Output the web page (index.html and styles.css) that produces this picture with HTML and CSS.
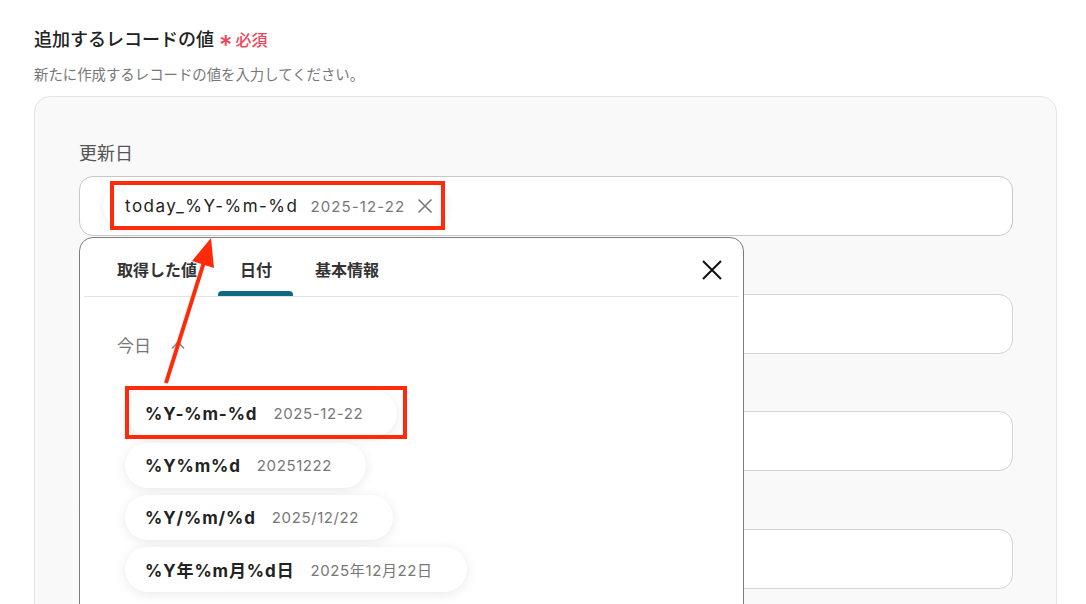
FILE: index.html
```html
<!DOCTYPE html>
<html lang="ja">
<head>
<meta charset="utf-8">
<title>追加するレコードの値</title>
<link rel="stylesheet" href="styles.css">
</head>
<body>
<section class="section">
  <h2 class="title">追加するレコードの値<span class="req"><span class="ast">*</span>必須</span></h2>
  <p class="desc">新たに作成するレコードの値を入力してください。</p>
  <div class="panel">
    <div class="field">
      <label class="label">更新日</label>
      <div class="input">
        <div class="tag">
          <span class="tag-key">today_%Y-%m-%d</span>
          <span class="tag-val">2025-12-22</span>
          <svg class="tag-x" width="16" height="16" viewBox="0 0 16 16"><path d="M1.5 1.5L14.5 14.5M14.5 1.5L1.5 14.5" stroke="#7a7a7a" stroke-width="1.6" fill="none"/></svg>
          <span class="mark mark-tag"></span>
        </div>
      </div>
      <div class="popup">
        <div class="tabs">
          <div class="tab">取得した値</div>
          <div class="tab active">日付</div>
          <div class="tab">基本情報</div>
          <svg class="close" width="20" height="20" viewBox="0 0 20 20"><path d="M1 1L19 19M19 1L1 19" stroke="#111" stroke-width="2" fill="none"/></svg>
        </div>
        <div class="popup-body">
          <div class="group-head">今日
            <svg class="chev" width="14" height="10" viewBox="0 0 14 10"><path d="M1 8.5L7 2L13 8.5" stroke="#8a8a8a" stroke-width="1.6" fill="none"/></svg>
          </div>
          <div class="items">
            <div class="item first"><span class="key">%Y-%m-%d</span><span class="val">2025-12-22</span><span class="mark mark-item"></span></div>
            <div class="item"><span class="key">%Y%m%d</span><span class="val">20251222</span></div>
            <div class="item"><span class="key">%Y/%m/%d</span><span class="val">2025/12/22</span></div>
            <div class="item"><span class="key">%Y年%m月%d日</span><span class="val">2025年12月22日</span></div>
          </div>
        </div>
      </div>
    </div>
    <div class="field">
      <label class="label">名前</label>
      <div class="input"></div>
    </div>
    <div class="field">
      <label class="label">メール</label>
      <div class="input"></div>
    </div>
    <div class="field">
      <label class="label">備考</label>
      <div class="input"></div>
    </div>
  </div>
</section>
<svg class="arrow" width="1086" height="604" viewBox="0 0 1086 604">
  <line x1="166" y1="383" x2="204" y2="262" stroke="#ff2a0a" stroke-width="4"/>
  <polygon points="211,238 214,268 192,261" fill="#ff2a0a"/>
</svg>
</body>
</html>
```
FILE: styles.css
```css
* { box-sizing: border-box; }
html, body { margin: 0; padding: 0; background: #fff; overflow: hidden; }
body {
  font-family: Inter, "Noto Sans CJK JP", sans-serif;
  color: #222;
  width: 1086px;
  height: 604px;
  position: relative;
}
.section {
  padding: 28px 29px 0 34px;
}
.title {
  margin: 0;
  font-size: 18px;
  line-height: 24px;
  font-weight: 500;
  color: #222;
  display: flex;
  align-items: center;
}
.req {
  margin-left: 5px;
  font-size: 16px;
  font-weight: 500;
  color: #f0445c;
  display: flex;
  align-items: center;
}
.ast {
  font-size: 26px;
  line-height: 16px;
  margin-right: 3px;
  position: relative;
  top: 5px;
}
.desc {
  margin: 14px 0 0;
  font-size: 14.4px;
  line-height: 18px;
  color: #777;
}
.panel {
  margin-top: 12px;
  background: #f9f9f9;
  border: 1px solid #e5e5e5;
  border-radius: 16px;
  padding: 46px 43px 40px 44px;
  display: flex;
  flex-direction: column;
  gap: 24.5px;
}
.field { position: relative; }
.label {
  display: block;
  font-size: 18px;
  line-height: 22px;
  color: #555;
  margin-bottom: 11px;
}
.input {
  height: 60px;
  background: #fff;
  border: 1px solid #d4d4d4;
  border-radius: 14px;
  display: flex;
  align-items: center;
  padding-left: 23px;
}
.field:first-child .input { border-color: #c8c8c8; }
.tag {
  position: relative;
  height: 44px;
  width: 344px;
  background: #fff;
  border-radius: 22px;
  box-shadow: 0 1px 8px rgba(0,0,0,0.08);
  display: flex;
  align-items: center;
  padding-left: 22px;
}
.tag-key { font-size: 17px; color: #222; letter-spacing: 1.5px; }
.tag-val { font-size: 15px; color: #777; margin-left: 12px; letter-spacing: 1.1px; }
.tag-x { margin-left: 12px; }
.mark {
  position: absolute;
  border: 4px solid #ff2a0a;
  pointer-events: none;
}
.mark-tag { left: 7px; top: -3px; width: 335px; height: 49px; }
.popup {
  position: absolute;
  left: 0;
  top: calc(100% + 1px);
  width: 665px;
  height: 420px;
  background: #fff;
  border: 1px solid #7d7d7d;
  border-radius: 14px;
  padding: 0 4px;
  z-index: 2;
}
.tabs {
  height: 59px;
  display: flex;
  align-items: stretch;
  padding-left: 11px;
  padding-top: 3px;
  border-bottom: 1px solid #e3e3e3;
  position: relative;
}
.tab {
  padding: 0 22px;
  font-size: 16px;
  font-weight: 600;
  color: #333;
  display: flex;
  align-items: center;
  position: relative;
}
.tab.active { margin-left: -1px; padding: 0 21px 0 22px; }
.tab.active::after {
  content: "";
  position: absolute;
  left: 0; right: 0; bottom: 0;
  height: 5px;
  background: #0e6a82;
  border-radius: 4px 4px 0 0;
}
.close {
  position: absolute;
  right: 17px;
  top: 22px;
}
.popup-body { padding: 38px 0 0 33px; }
.group-head {
  font-size: 17px;
  line-height: 22px;
  color: #777;
  display: flex;
  align-items: center;
  gap: 20px;
}
.chev { margin-top: -2px; }
.items {
  margin-top: 34px;
  display: flex;
  flex-direction: column;
  align-items: flex-start;
  gap: 7px;
  padding-left: 8px;
}
.item {
  position: relative;
  height: 45px;
  background: #fff;
  border-radius: 23px;
  box-shadow: 0 2px 12px rgba(0,0,0,0.09);
  display: flex;
  align-items: center;
  padding: 0 34px 0 20px;
}
.item.first { margin-left: 2px; padding-left: 18px; }
.key { font-size: 17px; font-weight: 700; color: #222; letter-spacing: 0.9px; }
.val { font-size: 15px; color: #777; margin-left: 16px; letter-spacing: 0.6px; }
.mark-item { left: -2px; top: -5px; right: -10px; bottom: -3px; }
.arrow {
  position: absolute;
  left: 0;
  top: 0;
  z-index: 5;
  pointer-events: none;
}
```
